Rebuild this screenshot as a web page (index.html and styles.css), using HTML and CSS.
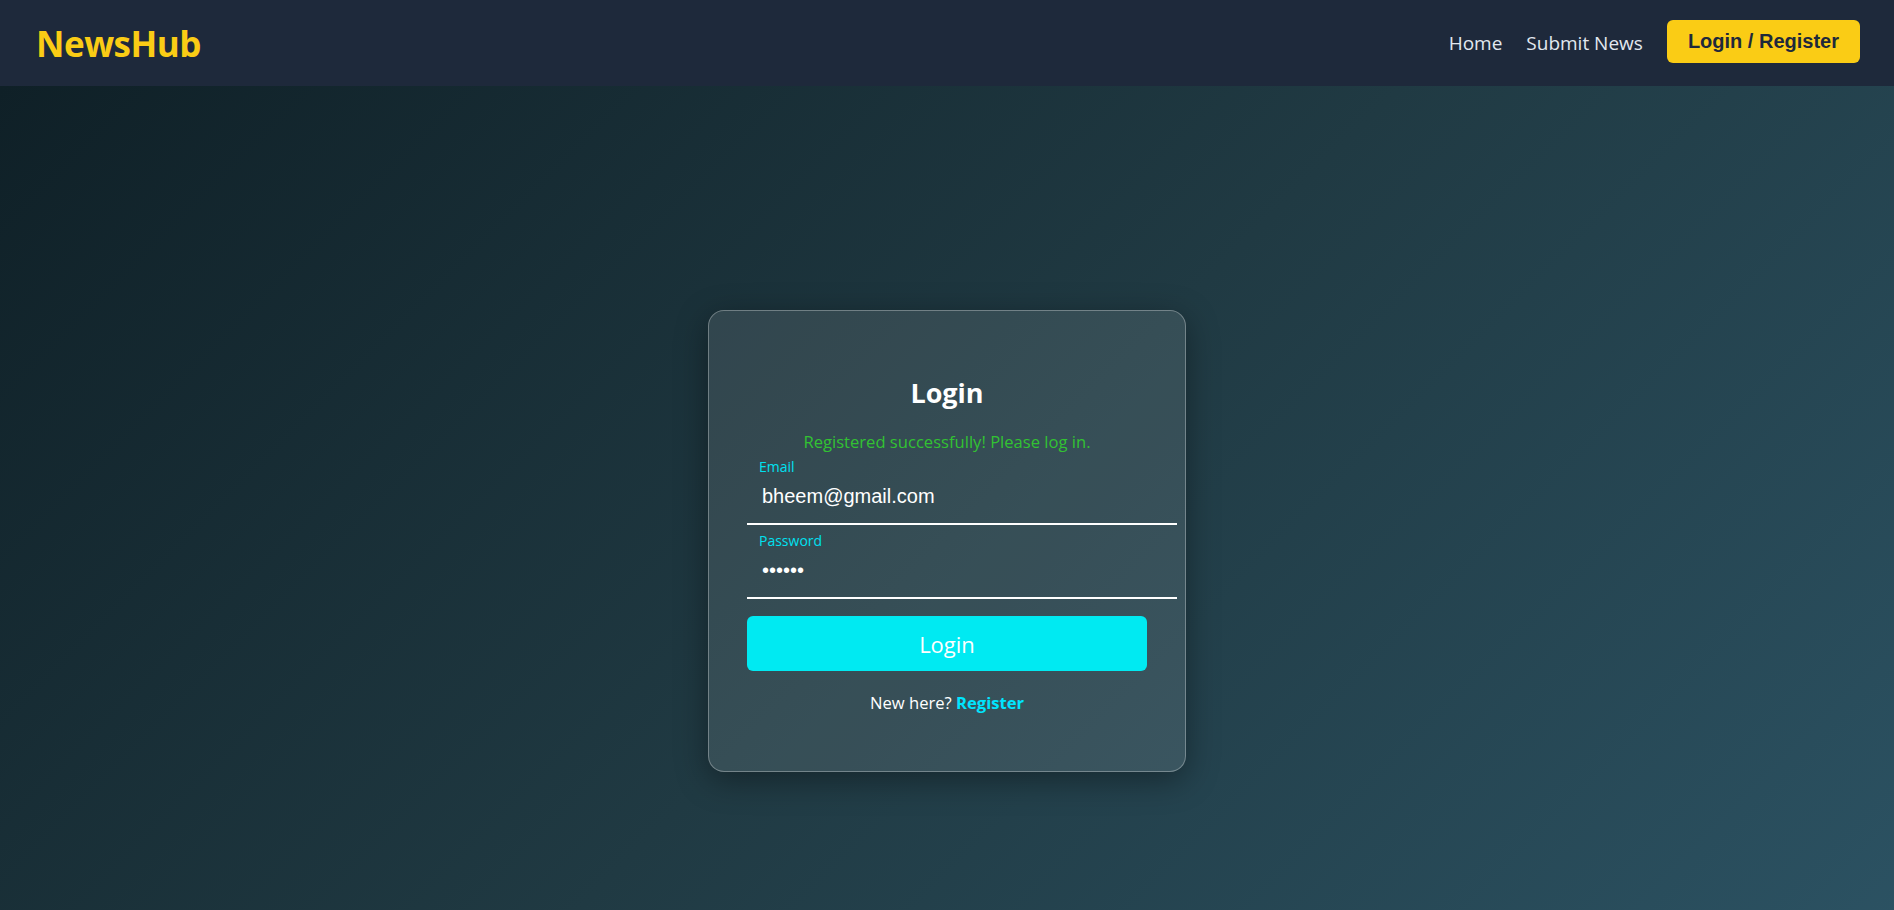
FILE: index.html
```html
<!DOCTYPE html>
<html lang="en">
<head>
<meta charset="utf-8">
<title>NewsHub - Login</title>
<link rel="stylesheet" href="styles.css">
</head>
<body>
<header class="navbar">
  <div class="logo">NewsHub</div>
  <nav class="nav-links">
    <a href="#" class="nav-link">Home</a>
    <a href="#" class="nav-link">Submit News</a>
    <a href="#" class="nav-btn">Login / Register</a>
  </nav>
</header>
<main class="page">
  <div class="card">
    <h2 class="card-title">Login</h2>
    <p class="success">Registered successfully! Please log in.</p>
    <form class="form">
      <div class="field">
        <label class="field-label">Email</label>
        <input class="field-input" type="email" value="bheem@gmail.com">
      </div>
      <div class="field">
        <label class="field-label">Password</label>
        <input class="field-input" type="password" value="bheem1">
      </div>
      <button type="button" class="submit">Login</button>
    </form>
    <p class="switch">New here? <a href="#" class="switch-link">Register</a></p>
  </div>
</main>
</body>
</html>
```

FILE: styles.css
```css
* { box-sizing: content-box; }
html, body { margin: 0; padding: 0; }
body {
  font-family: "Open Sans", "Noto Sans", sans-serif;
  background: #1e293b;
  color: #fff;
}
.navbar {
  height: 86px;
  background: #1e293b;
  display: flex;
  align-items: center;
  justify-content: space-between;
  padding: 0 34px 0 36px;
}
.logo {
  color: #facc15;
  font-weight: 700;
  font-size: 35px;
  letter-spacing: -0.5px;
}
.nav-links {
  display: flex;
  align-items: center;
}
.nav-link {
  color: #e2e8f0;
  text-decoration: none;
  font-size: 19px;
  margin-right: 24px;
}
.nav-btn {
  background: #facc15;
  color: #1e293b;
  font-family: "Liberation Sans", Arial, sans-serif;
  font-weight: 700;
  font-size: 20px;
  text-decoration: none;
  padding: 10px 21px;
  border-radius: 6px;
  margin-top: -3px;
}
.page {
  min-height: 910px;
  display: flex;
  align-items: center;
  justify-content: center;
  background: linear-gradient(135deg, #0f2027, #203a43, #2c5364);
}
.card {
  width: 400px;
  padding: 38px;
  border: 1px solid rgba(255,255,255,0.3);
  border-radius: 16px;
  background: rgba(255,255,255,0.1);
  box-shadow: 0 8px 32px rgba(0,0,0,0.37);
  text-align: center;
}
.card-title {
  margin: 26px 0 19px;
  font-size: 27px;
  font-weight: 700;
  line-height: 36px;
}
.success {
  color: #32c232;
  font-size: 16.6px;
  margin: 0 0 5px;
  line-height: 24px;
}
.form { text-align: left; }
.field {
  margin-bottom: 8px;
}
.field-label {
  display: block;
  color: #00e1f0;
  font-size: 14px;
  line-height: 16px;
  padding-left: 12px;
}
.field-input {
  display: block;
  width: 100%;
  padding: 9px 15px 15px;
  background: transparent;
  border: none;
  border-bottom: 2px solid #fff;
  color: #fff;
  font-family: "Liberation Sans", Arial, sans-serif;
  font-size: 20px;
  line-height: 24px;
  outline: none;
}
.submit {
  display: block;
  width: 100%;
  height: 55px;
  padding: 0;
  margin-top: 17px;
  background: #00eaf2;
  color: #fff;
  border: none;
  border-radius: 6px;
  font-family: "Open Sans", "Noto Sans", sans-serif;
  font-size: 22px;
}
.switch {
  margin: 20px 0 19px;
  font-size: 16.6px;
  color: #fff;
}
.switch-link {
  color: #00e5ff;
  font-weight: 700;
  text-decoration: none;
}
```
